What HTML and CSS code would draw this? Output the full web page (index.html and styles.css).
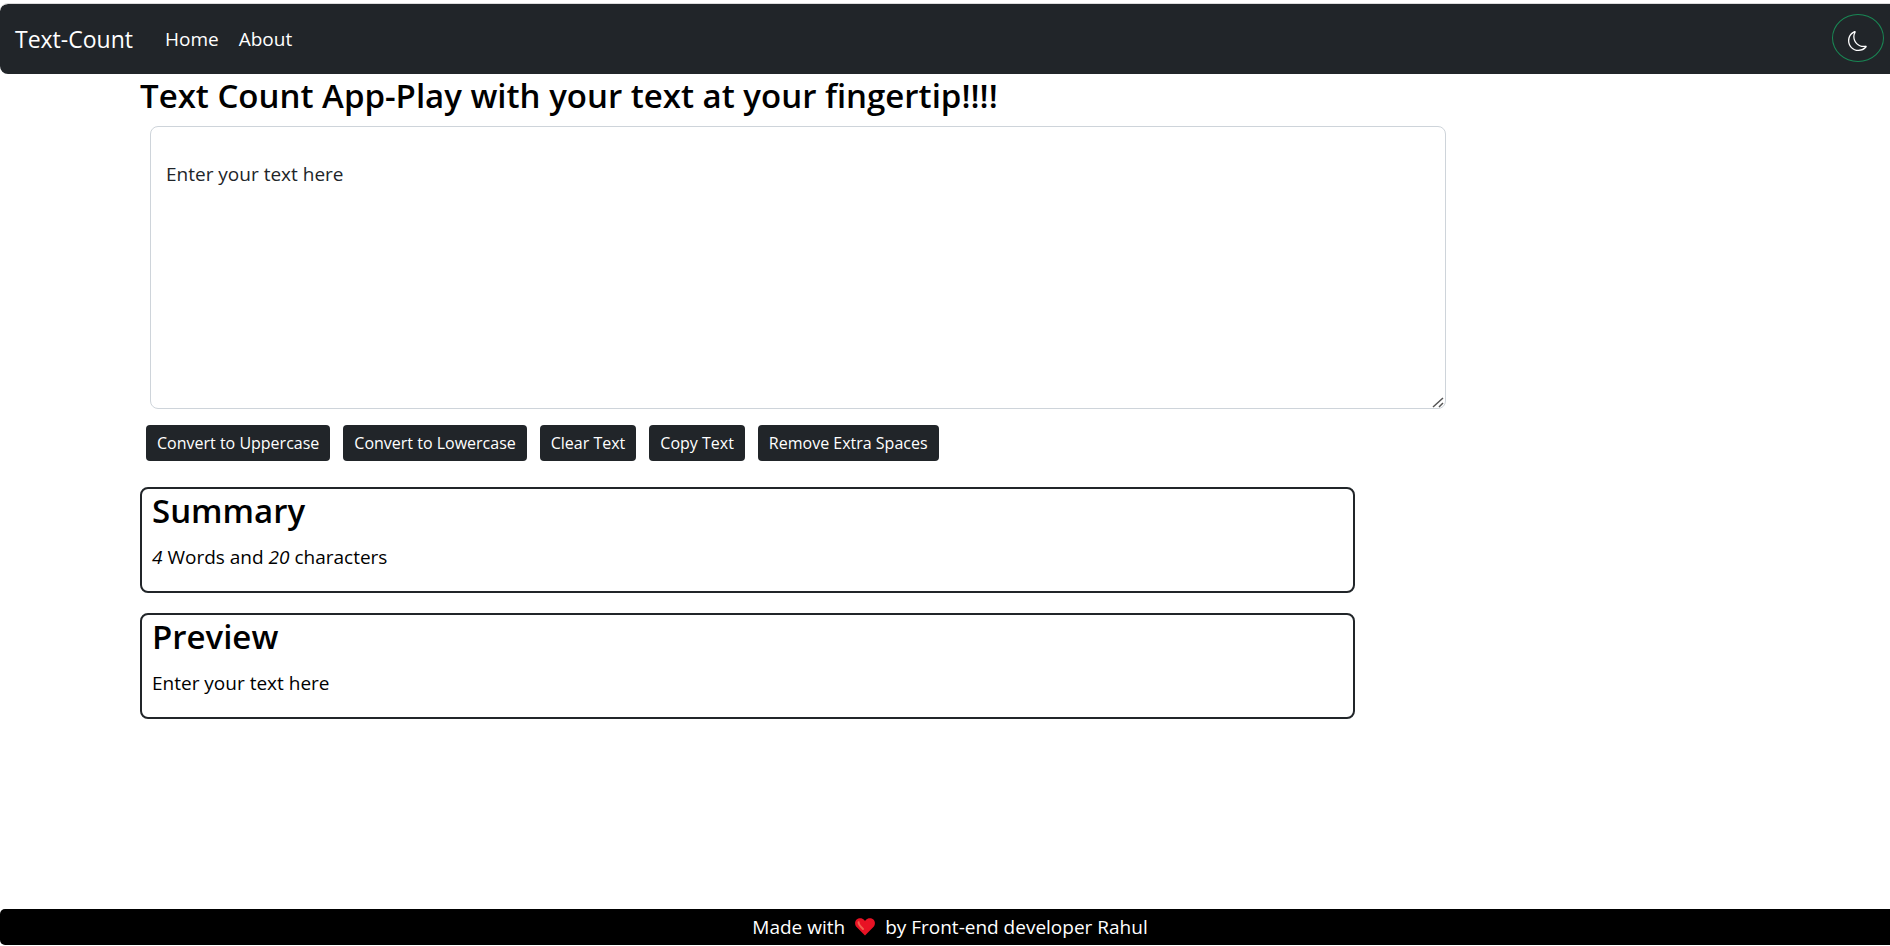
FILE: index.html
```html
<!DOCTYPE html>
<html lang="en">
<head>
<meta charset="utf-8">
<title>Text-Count</title>
<link rel="stylesheet" href="styles.css">
</head>
<body>
<nav class="navbar">
  <a class="brand" href="#">Text-Count</a>
  <a class="nav-link" href="#">Home</a>
  <a class="nav-link" href="#">About</a>
  <button class="theme-toggle" type="button" aria-label="Toggle dark mode">
    <svg width="20" height="20" viewBox="0 0 16 16" fill="currentColor" aria-hidden="true"><path d="M6 .278a.768.768 0 0 1 .08.858 7.208 7.208 0 0 0-.878 3.46c0 4.021 3.278 7.277 7.318 7.277.527 0 1.04-.055 1.533-.16a.787.787 0 0 1 .81.316.733.733 0 0 1-.031.893A8.349 8.349 0 0 1 8.344 16C3.734 16 0 12.286 0 7.71 0 4.266 2.114 1.312 5.124.06A.752.752 0 0 1 6 .278zM4.858 1.311A7.269 7.269 0 0 0 1.025 7.71c0 4.02 3.279 7.276 7.319 7.276a7.316 7.316 0 0 0 5.205-2.162c-.337.042-.68.063-1.029.063-4.61 0-8.343-3.714-8.343-8.29 0-1.167.242-2.278.681-3.286z"/></svg>
  </button>
</nav>
<main class="container">
  <h1 class="heading"><label for="text">Text Count App-Play with your text at your fingertip!!!!</label></h1>
  <textarea class="text-input" id="text" spellcheck="false">Enter your text here</textarea>
  <div class="actions">
    <button class="btn" type="button">Convert to Uppercase</button>
    <button class="btn" type="button">Convert to Lowercase</button>
    <button class="btn" type="button">Clear Text</button>
    <button class="btn" type="button">Copy Text</button>
    <button class="btn" type="button">Remove Extra Spaces</button>
  </div>
  <section class="card">
    <h2 class="heading">Summary</h2>
    <p class="card-text"><i>4</i> Words and <i>20</i> characters</p>
  </section>
  <section class="card">
    <h2 class="heading">Preview</h2>
    <p class="card-text">Enter your text here</p>
  </section>
</main>
<footer class="footer">
  <span>Made with</span>
  <svg width="20" height="18" viewBox="0 0 20 18" aria-hidden="true"><path fill="#e81224" d="M10 17.5 1.6 9C-.5 6.700-.3 3.400 1.600 1.600 3.700-.3 7.200-.3 9.200 2L10 3l.8-1c2-2.300 5.500-2.300 7.600-.4 1.900 1.800 2.100 5.100 0 7.400z"/><path fill="none" stroke="#f4614f" stroke-width="2" stroke-linecap="round" d="M3.600 4.200c-.3 2 1.200 3.800 4.400 6.800"/></svg>
  <span>by Front-end developer Rahul</span>
</footer>
</body>
</html>
```
FILE: styles.css
```css
* {
  box-sizing: border-box;
}

body {
  margin: 0;
  min-height: 100vh;
  display: flex;
  flex-direction: column;
  padding: 3px 0 1px;
  background: #fff;
  color: #000;
  font: 19px/32px "Segoe UI", "Open Sans", "Noto Sans", sans-serif;
}

.navbar {
  display: flex;
  align-items: center;
  min-height: 71px;
  padding: 0 6px 0 15px;
  border-top: 1px solid #dcdcdc;
  border-radius: 8px 0 0 8px;
  background: #212529;
  background-clip: padding-box;
}

.brand,
.nav-link {
  color: #fff;
  text-decoration: none;
}

.brand {
  margin-right: 22px;
  font-size: 23px;
}

.nav-link {
  padding: 10px;
}

.theme-toggle {
  display: flex;
  align-items: center;
  justify-content: center;
  width: 52px;
  height: 48px;
  margin: 0 0 2px auto;
  padding: 6px 0 0;
  border: 1px solid #198754;
  border-radius: 50%;
  background: transparent;
  color: #fff;
}

.container {
  flex: 1;
  margin: 0 130px 0 140px;
}

.heading {
  margin: 0 0 8px;
  font-size: 33px;
  font-weight: 600;
  line-height: 44px;
}

.text-input {
  display: block;
  width: 80%;
  height: 283px;
  margin-left: 10px;
  padding: 31px 15px;
  border: 1px solid #ced4da;
  border-radius: 8px;
  color: #212529;
  font: inherit;
}

.text-input::-webkit-resizer {
  background: url("data:image/svg+xml,%3Csvg xmlns='http://www.w3.org/2000/svg' width='15' height='15'%3E%3Cpath d='M3 14 13 5M9 14l4-4' stroke='%23555' stroke-width='1.5'/%3E%3C/svg%3E") no-repeat;
}

.actions {
  display: flex;
  flex-wrap: wrap;
  gap: 13px;
  margin: 16px 6px 26px;
}

.btn {
  height: 36px;
  padding: 0 11px;
  border: 0;
  border-radius: 4px;
  background: #212529;
  color: #fff;
  font: inherit;
  font-size: 16px;
}

.card {
  width: 75%;
  margin-bottom: 20px;
  padding: 0 10px;
  border: 2px solid #212529;
  border-radius: 8px;
}

.card-text {
  margin: 0 0 18px;
}

.footer {
  display: flex;
  justify-content: center;
  align-items: center;
  gap: 10px;
  min-height: 36px;
  padding-left: 10px;
  border-radius: 5px 0 0 5px;
  background: #000;
  color: #fff;
}
```
